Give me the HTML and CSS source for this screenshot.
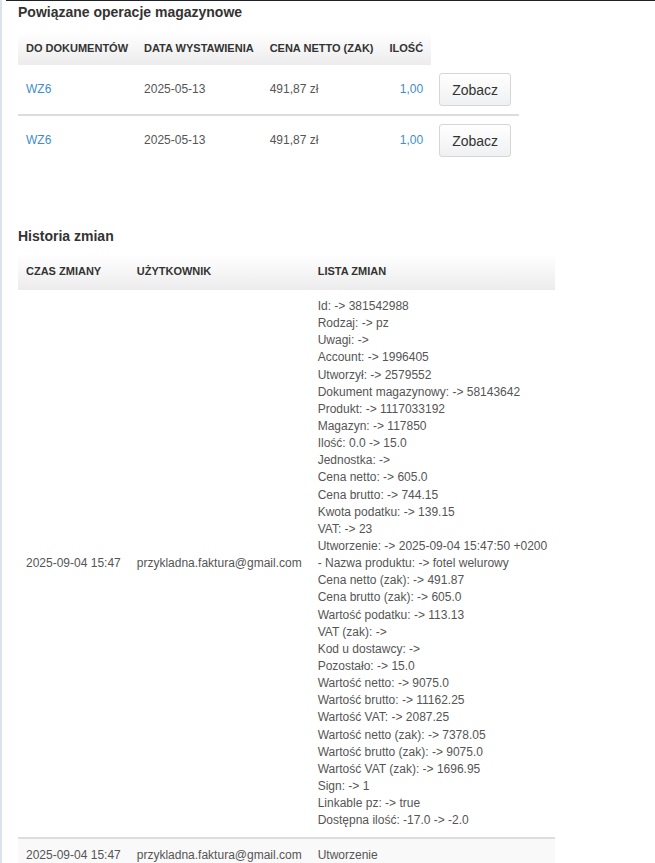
FILE: index.html
```html
<!DOCTYPE html>
<html lang="pl">
<head>
<meta charset="utf-8">
<title>Powiązane operacje</title>
<link rel="stylesheet" href="styles.css">
</head>
<body>
<div class="page">
  <div class="topline"></div>
  <div class="content">
    <h3 class="title">Powiązane operacje magazynowe</h3>
    <table class="tbl ops">
      <thead>
        <tr>
          <th>Do dokumentów</th>
          <th>Data wystawienia</th>
          <th>Cena netto (zak)</th>
          <th class="num">Ilość</th>
        </tr>
      </thead>
      <tbody>
        <tr>
          <td><a href="#" class="link">WZ6</a></td>
          <td>2025-05-13</td>
          <td>491,87 zł</td>
          <td class="num link">1,00</td>
          <td><button class="btn">Zobacz</button></td>
        </tr>
        <tr>
          <td><a href="#" class="link">WZ6</a></td>
          <td>2025-05-13</td>
          <td>491,87 zł</td>
          <td class="num link">1,00</td>
          <td><button class="btn">Zobacz</button></td>
        </tr>
      </tbody>
    </table>

    <h3 class="title history-title">Historia zmian</h3>
    <table class="tbl history">
      <thead>
        <tr>
          <th>Czas zmiany</th>
          <th>Użytkownik</th>
          <th>Lista zmian</th>
        </tr>
      </thead>
      <tbody>
        <tr>
          <td>2025-09-04 15:47</td>
          <td>przykladna.faktura@gmail.com</td>
          <td class="changes">Id: -&gt; 381542988<br>Rodzaj: -&gt; pz<br>Uwagi: -&gt;<br>Account: -&gt; 1996405<br>Utworzył: -&gt; 2579552<br>Dokument magazynowy: -&gt; 58143642<br>Produkt: -&gt; 1117033192<br>Magazyn: -&gt; 117850<br>Ilość: 0.0 -&gt; 15.0<br>Jednostka: -&gt;<br>Cena netto: -&gt; 605.0<br>Cena brutto: -&gt; 744.15<br>Kwota podatku: -&gt; 139.15<br>VAT: -&gt; 23<br>Utworzenie: -&gt; 2025-09-04 15:47:50 +0200<br>- Nazwa produktu: -&gt; fotel welurowy<br>Cena netto (zak): -&gt; 491.87<br>Cena brutto (zak): -&gt; 605.0<br>Wartość podatku: -&gt; 113.13<br>VAT (zak): -&gt;<br>Kod u dostawcy: -&gt;<br>Pozostało: -&gt; 15.0<br>Wartość netto: -&gt; 9075.0<br>Wartość brutto: -&gt; 11162.25<br>Wartość VAT: -&gt; 2087.25<br>Wartość netto (zak): -&gt; 7378.05<br>Wartość brutto (zak): -&gt; 9075.0<br>Wartość VAT (zak): -&gt; 1696.95<br>Sign: -&gt; 1<br>Linkable pz: -&gt; true<br>Dostępna ilość: -17.0 -&gt; -2.0</td>
        </tr>
        <tr class="striped">
          <td>2025-09-04 15:47</td>
          <td>przykladna.faktura@gmail.com</td>
          <td>Utworzenie</td>
        </tr>
      </tbody>
    </table>
  </div>
</div>
</body>
</html>
```
FILE: styles.css
```css
html, body {
  margin: 0;
  padding: 0;
  background: #fff;
}
body {
  font-family: "Liberation Sans", Arial, Helvetica, sans-serif;
  font-size: 12px;
  line-height: 1.428571;
  color: #555;
}
.page {
  border-left: 2px solid #dce3ea;
  min-height: 863px;
}
.topline {
  height: 1px;
  background: #1e2327;
  margin-left: 4px;
}
.content {
  padding: 0 16px;
}
.title {
  margin: 3px 0 0;
  font-size: 14px;
  font-weight: bold;
  color: #333;
  line-height: 17px;
  height: 28px;
}
.history-title {
  margin-top: 63px;
  height: 26px;
}
.tbl {
  border-collapse: collapse;
  border-spacing: 0;
}
.tbl th {
  text-align: left;
  font-size: 11px;
  font-weight: bold;
  text-transform: uppercase;
  color: #333;
  padding: 8px;
  line-height: 17px;
  background: linear-gradient(to bottom, #ffffff 0%, #ececec 100%);
  white-space: nowrap;
}
.tbl td {
  padding: 8px;
  vertical-align: middle;
  white-space: nowrap;
}
.tbl .num {
  text-align: right;
}
.link {
  color: #3f8dcc;
  text-decoration: none;
}
.ops tbody tr + tr td {
  border-top: 2px solid #dddddd;
}
.btn {
  font-family: "Liberation Sans", Arial, Helvetica, sans-serif;
  font-size: 14px;
  color: #333;
  height: 33px;
  width: 72px;
  padding: 0 12px;
  border: 1px solid #d6d6d6;
  border-radius: 3px;
  background: linear-gradient(to bottom, #ffffff 0%, #eef0f2 100%);
  cursor: pointer;
  vertical-align: middle;
}
.history th {
  padding-top: 9px;
  padding-bottom: 10px;
}
.history td.changes {
  vertical-align: top;
}
.history tbody tr + tr td {
  border-top: 2px solid #dddddd;
}
.history tr.striped td {
  background: #f9f9f9;
}
```
